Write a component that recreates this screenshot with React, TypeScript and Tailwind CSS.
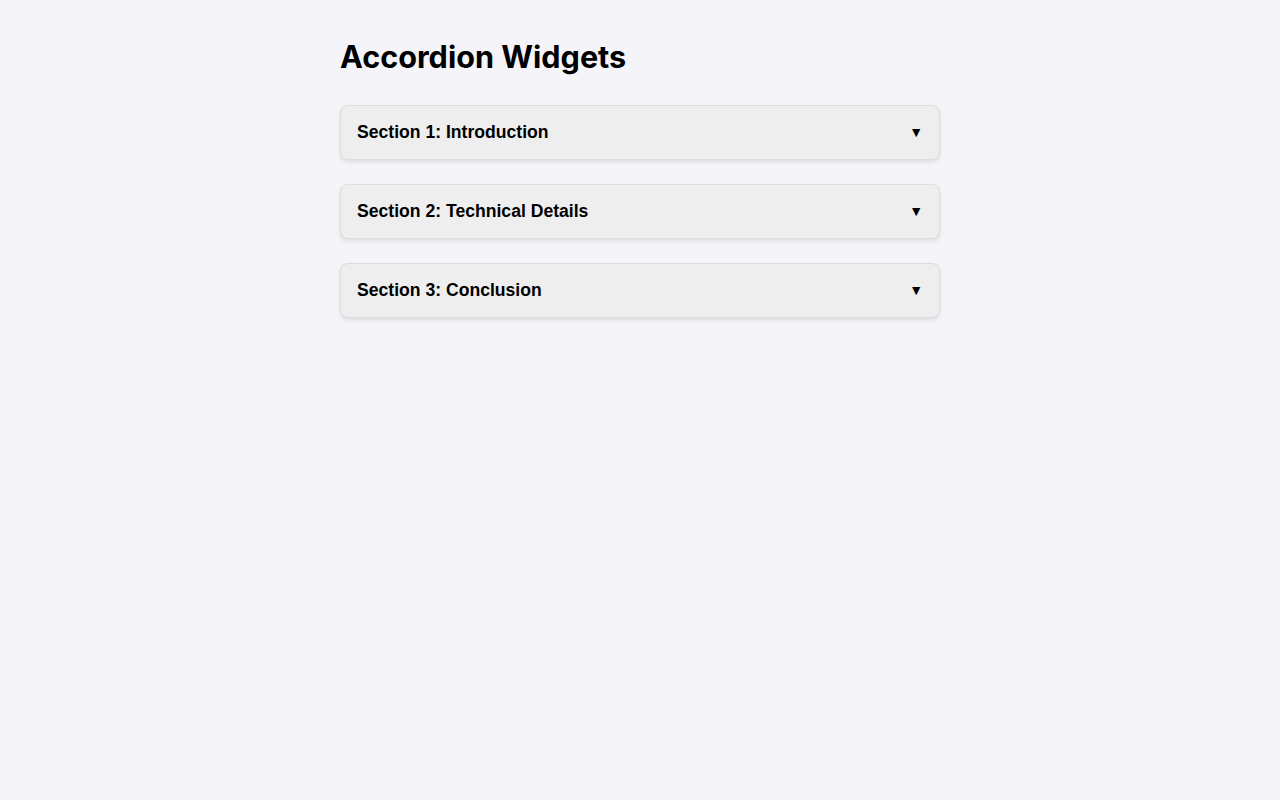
import React from 'react'

const sections = [
  'Section 1: Introduction',
  'Section 2: Technical Details',
  'Section 3: Conclusion',
]

export default function App() {
  return (
    <div className="min-h-screen bg-[#f4f4f9] font-['Liberation_Sans',Arial,sans-serif] text-black">
      <div className="mx-auto w-[600px] pt-[38px]">
        <h1 className="mb-[29px] font-['Inter',sans-serif] text-[30.6px] font-bold leading-[38px]">
          Accordion Widgets
        </h1>
        <div className="flex flex-col gap-[24px]">
          {sections.map((s, i) => (
            <div
              key={i}
              className="rounded-lg border border-[#dddddd] bg-[#eeeeee] shadow-[0_2px_4px_rgba(0,0,0,0.1)]"
            >
              <button className="flex w-full cursor-pointer items-center justify-between px-4 py-4 text-left text-[17.6px] font-bold leading-[21px]">
                <span>{s}</span>
                <span className="text-[14px]">▼</span>
              </button>
            </div>
          ))}
        </div>
      </div>
    </div>
  )
}
